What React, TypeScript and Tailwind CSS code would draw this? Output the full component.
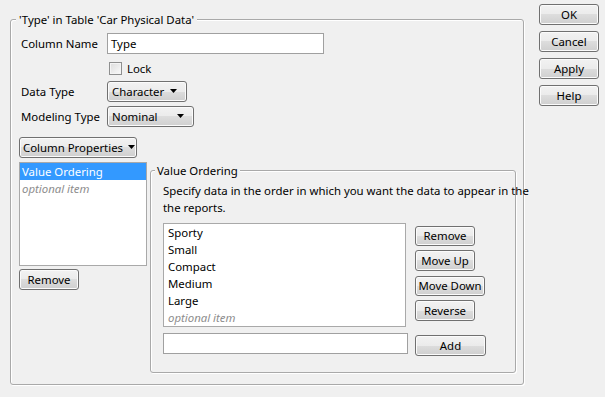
import React from "react";

const btn =
  "flex items-center justify-center whitespace-nowrap border border-[#707070] rounded-[3px] bg-[linear-gradient(to_bottom,#f2f2f2_0%,#ebebeb_50%,#dddddd_50%,#cfcfcf_100%)] shadow-[inset_0_0_0_1px_#fbfbfb] text-black";

function Arrow() {
  return (
    <svg width="8" height="5" viewBox="0 0 8 5" className="shrink-0">
      <path d="M0 0 H7 L3.5 4 Z" fill="#000" />
    </svg>
  );
}

function Dropdown({ label, width }: { label: string; width: string }) {
  return (
    <div className={`${btn} ${width} h-[21px] !justify-between pl-[4px] pr-[8px]`}>
      <span>{label}</span>
      <Arrow />
    </div>
  );
}

export default function App() {
  const items = ["Sporty", "Small", "Compact", "Medium", "Large"];
  return (
    <div
      className="w-[605px] h-[397px] bg-[#f0f0f0] flex text-[11.4px] text-black leading-none whitespace-nowrap"
      style={{ fontFamily: '"Noto Sans", "Open Sans", sans-serif' }}
    >
      {/* Main group */}
      <div className="relative ml-[10px] mt-[19px] w-[514px] h-[366px] border border-[#a9a9a9] rounded-[3px] shadow-[1px_1px_0_#ffffff,inset_1px_1px_0_#ffffff]">
        <span className="absolute -top-[8px] left-[5px] px-[3px] bg-[#f0f0f0] leading-[16px]">
          'Type' in Table 'Car Physical Data'
        </span>
        <div className="pl-[8px] pt-[13px]">
          <div className="flex items-center h-[21px]">
            <span className="w-[88px] pl-[2px]">Column Name</span>
            <div className="w-[217px] h-[21px] bg-white border border-[#a0a0a0] flex items-center pl-[3px]">Type</div>
          </div>
          <div className="flex items-center h-[13px] mt-[8px]">
            <div className="ml-[90px] w-[13px] h-[13px] border border-[#8e8f8f] bg-[linear-gradient(135deg,#dcdcdc,#fafafa)] shadow-[inset_0_0_0_1px_#f4f4f4]" />
            <span className="ml-[5px]">Lock</span>
          </div>
          <div className="flex items-center h-[21px] mt-[6px]">
            <span className="w-[88px] pl-[2px]">Data Type</span>
            <Dropdown label="Character" width="w-[80px]" />
          </div>
          <div className="flex items-center h-[21px] mt-[4px]">
            <span className="w-[88px] pl-[2px]">Modeling Type</span>
            <Dropdown label="Nominal" width="w-[87px]" />
          </div>
          <div className={`${btn} w-[118px] h-[21px] mt-[10px] !justify-start gap-[5px] pl-[3px]`}>
            <span>Column Properties</span>
            <Arrow />
          </div>
          <div className="flex mt-[4px]">
            <div className="flex flex-col">
              <div className="w-[128px] h-[104px] bg-white border border-[#a9a9a9]">
                <div className="h-[17px] bg-[#3399ff] text-white flex items-center pl-[2px]">Value Ordering</div>
                <div className="h-[17px] text-[#8d8d8d] italic flex items-center pl-[2px]">optional item</div>
              </div>
              <div className={`${btn} w-[60px] h-[21px] mt-[3px]`}>Remove</div>
            </div>
            {/* Value Ordering group */}
            <div className="relative ml-[3px] mt-[8px] w-[366px] h-[203px] border border-[#a9a9a9] rounded-[3px] shadow-[1px_1px_0_#ffffff,inset_1px_1px_0_#ffffff]">
              <span className="absolute -top-[8px] left-[4px] px-[2px] bg-[#f0f0f0] leading-[16px]">Value Ordering</span>
              <div className="pl-[12px] pt-[11px]">
                <p className="leading-[17px]">
                  Specify data in the order in which you want the data to appear in the
                  <br />
                  the reports.
                </p>
                <div className="flex mt-[7px]">
                  <div className="w-[243px] h-[104px] bg-white border border-[#a9a9a9]">
                    {items.map((it) => (
                      <div key={it} className="h-[17px] flex items-center pl-[4px]">{it}</div>
                    ))}
                    <div className="h-[17px] flex items-center pl-[4px] italic text-[#8d8d8d]">optional item</div>
                  </div>
                  <div className="flex flex-col ml-[9px] mt-[3px] gap-[4px]">
                    <div className={`${btn} w-[60px] h-[20px]`}>Remove</div>
                    <div className={`${btn} w-[60px] h-[21px]`}>Move Up</div>
                    <div className={`${btn} w-[70px] h-[20px] mt-[1px]`}>Move Down</div>
                    <div className={`${btn} w-[60px] h-[21px]`}>Reverse</div>
                  </div>
                </div>
                <div className="flex mt-[6px]">
                  <div className="w-[245px] h-[21px] bg-white border border-[#a0a0a0]" />
                  <div className={`${btn} w-[71px] h-[21px] ml-[7px] mt-[2px]`}>Add</div>
                </div>
              </div>
            </div>
          </div>
        </div>
      </div>
      {/* Dialog buttons */}
      <div className="flex flex-col ml-[15px] mt-[4px] gap-[6px]">
        <div className={`${btn} w-[60px] h-[21px]`}>OK</div>
        <div className={`${btn} w-[60px] h-[21px]`}>Cancel</div>
        <div className={`${btn} w-[60px] h-[21px]`}>Apply</div>
        <div className={`${btn} w-[60px] h-[21px]`}>Help</div>
      </div>
    </div>
  );
}
